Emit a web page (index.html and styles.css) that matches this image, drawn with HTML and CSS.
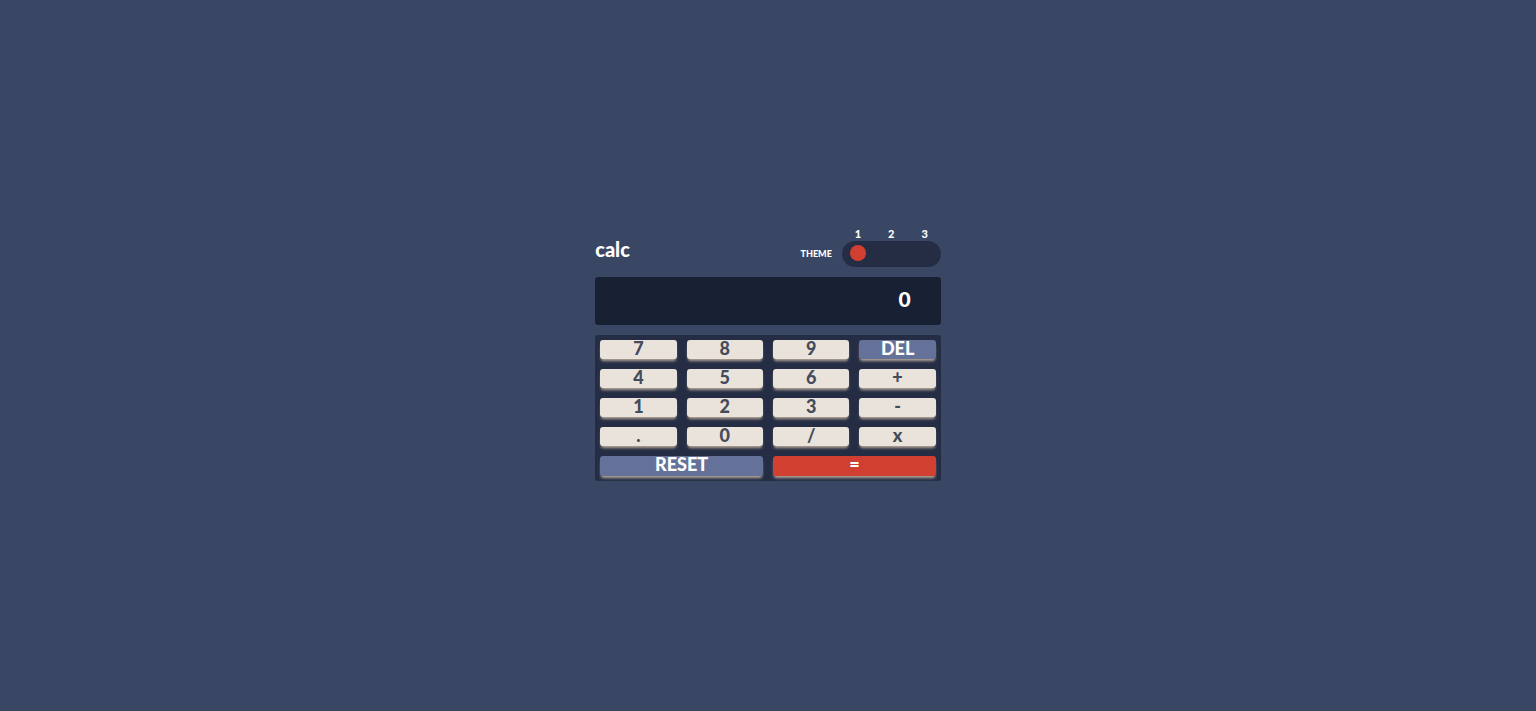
FILE: index.html
```html
<!DOCTYPE html>
<html lang="en">
<head>
    <meta charset="UTF-8">
    <meta name="viewport" content="width=device-width, initial-scale=1.0">
    <title>Calculator</title>
    <link rel="stylesheet" href="styles.css">
</head>
<body>
    <main class="calculator">
        <header class="header">
            <h1 class="logo">calc</h1>
            <label class="theme-label" for="theme">THEME</label>
            <div class="theme-switch">
                <div class="theme-numbers">
                    <span>1</span>
                    <span>2</span>
                    <span>3</span>
                </div>
                <input type="range" id="theme" class="theme-slider" min="1" max="3" value="1">
            </div>
        </header>

        <input type="text" id="screen" class="screen" value="0" aria-label="Result" readonly>

        <div class="keypad">
            <button class="key">7</button>
            <button class="key">8</button>
            <button class="key">9</button>
            <button class="key key-blue">DEL</button>
            <button class="key">4</button>
            <button class="key">5</button>
            <button class="key">6</button>
            <button class="key">+</button>
            <button class="key">1</button>
            <button class="key">2</button>
            <button class="key">3</button>
            <button class="key">-</button>
            <button class="key">.</button>
            <button class="key">0</button>
            <button class="key">/</button>
            <button class="key">x</button>
            <button class="key key-blue key-wide">RESET</button>
            <button class="key key-red key-wide">=</button>
        </div>
    </main>

    <script>
        const screen_ = document.getElementById('screen');

        document.querySelector('.keypad').addEventListener('click', function(e) {
            if (!e.target.classList.contains('key')) return;
            const key = e.target.textContent;
            const current = screen_.value;

            if (key === 'RESET') {
                screen_.value = '0';
            } else if (key === 'DEL') {
                screen_.value = current.slice(0, -1) || '0';
            } else if (key === '=') {
                try {
                    screen_.value = Function('return ' + current.replace(/x/g, '*'))();
                } catch (error) {
                    screen_.value = '0';
                }
            } else {
                screen_.value = current === '0' && /\d/.test(key) ? key : current + key;
            }
        });
    </script>
</body>
</html>
```
FILE: styles.css
```css
* {
    box-sizing: border-box;
}
body {
    margin: 0;
    padding-bottom: 4px;
    min-height: 100vh;
    display: flex;
    justify-content: center;
    align-items: center;
    background-color: #3a4764;
    color: #fff;
    font-family: Lato, sans-serif;
    font-weight: 900;
}
button, input {
    margin: 0;
    border: none;
    font: inherit;
}
.calculator {
    width: 22.5%;
    min-width: 300px;
    display: flex;
    flex-direction: column;
    gap: 10px;
}
.header {
    display: flex;
    align-items: flex-end;
}
.logo {
    margin: 0 auto 0 0;
    font-size: 20px;
    line-height: 36px;
    font-weight: 900;
}
.theme-label {
    margin-right: 10px;
    font-size: 9px;
    line-height: 26px;
}
.theme-switch {
    width: 99px;
}
.theme-numbers {
    display: flex;
    justify-content: space-between;
    padding: 0 13px;
    font-size: 11px;
    line-height: 14px;
}
.theme-slider {
    display: block;
    width: 100%;
    height: 26px;
    padding: 0 8px 2px;
    border-radius: 13px;
    background-color: #242d44;
    appearance: none;
    cursor: pointer;
}
.theme-slider::-webkit-slider-thumb {
    width: 16px;
    height: 16px;
    border-radius: 50%;
    background-color: #d03f2f;
    appearance: none;
}
.screen {
    width: 100%;
    height: 48px;
    padding: 0 30px 4px;
    border-radius: 3px;
    background-color: #182034;
    color: #fff;
    font-size: 21px;
    text-align: right;
}
.keypad {
    display: grid;
    grid-template-columns: repeat(4, 1fr);
    grid-template-rows: repeat(5, 1fr);
    gap: 10px;
    min-height: 146px;
    padding: 5px;
    border-radius: 3px;
    background-color: #242d44;
}
.key {
    padding: 0 0 2px;
    border-radius: 3px;
    background-color: #eae3dc;
    box-shadow: 0 3px 3px -1px #b4a597;
    color: #444b5a;
    font-size: 18px;
    line-height: 17px;
    cursor: pointer;
}
.key-blue {
    background-color: #647198;
    color: #fff;
}
.key-red {
    background-color: #d03f2f;
    color: #fff;
}
.key-wide {
    grid-column: span 2;
}
```
